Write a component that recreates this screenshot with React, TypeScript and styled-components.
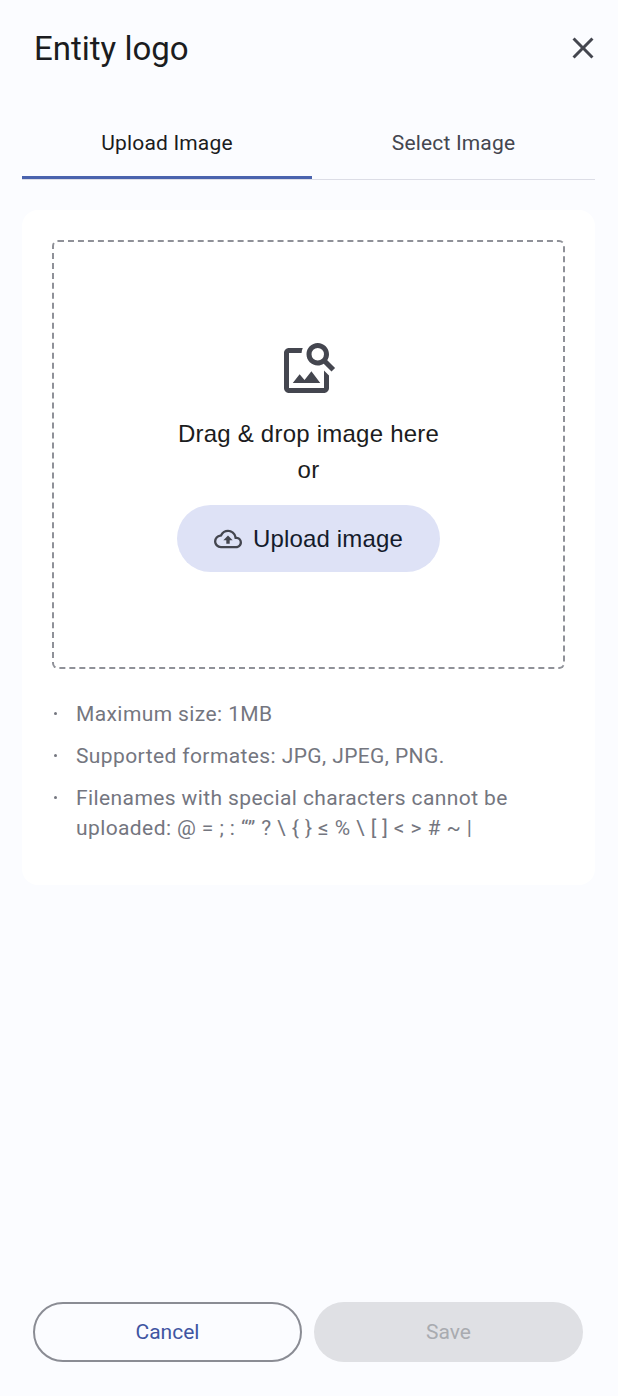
import React from 'react';
import styled, { createGlobalStyle } from 'styled-components';
import { MdClose, MdOutlineCloudUpload, MdOutlineImageSearch } from 'react-icons/md';

const GlobalStyle = createGlobalStyle`
  html, body {
    margin: 0;
    padding: 0;
    background: #fbfcff;
  }
  * {
    box-sizing: border-box;
  }
`;

const App = () => {
  return (
    <>
      <GlobalStyle />
      <Layout>
        <Header>
          <Title>Entity logo</Title>
          <CloseBtn aria-label="Close">
            <MdClose />
          </CloseBtn>
        </Header>
        <Tabs>
          <Tab $active>Upload Image</Tab>
          <Tab>Select Image</Tab>
        </Tabs>
        <Card>
          <DropZone>
            <DropIcon>
              <MdOutlineImageSearch />
            </DropIcon>
            <DropText>Drag &amp; drop image here</DropText>
            <DropText>or</DropText>
            <UploadBtn>
              <MdOutlineCloudUpload />
              Upload image
            </UploadBtn>
          </DropZone>
          <Rules>
            <Rule>Maximum size: 1MB</Rule>
            <Rule>Supported formates: JPG, JPEG, PNG.</Rule>
            <Rule>
              <span>
                Filenames with special characters cannot be uploaded: @ = ; : “” ? \ {'{'} {'}'} ≤ % \ [ ] &lt; &gt; # ~ |
              </span>
            </Rule>
          </Rules>
        </Card>
        <Footer>
          <CancelBtn>Cancel</CancelBtn>
          <SaveBtn disabled>Save</SaveBtn>
        </Footer>
      </Layout>
    </>
  );
};

export default App;

const Layout = styled.div`
  display: flex;
  flex-direction: column;
  height: 1396px;
  padding: 0 23px 0 22px;
  background: #fbfcff;
  font-family: Roboto, sans-serif;
`;

const Header = styled.div`
  display: flex;
  justify-content: space-between;
  align-items: center;
  height: 96px;
  padding-left: 12px;
`;

const Title = styled.h1`
  margin: 0;
  color: #1b1c20;
  font-size: 33px;
  font-weight: 400;
`;

const CloseBtn = styled.button`
  display: flex;
  margin-right: -6px;
  padding: 0;
  border: none;
  background: none;
  color: #44464f;
  font-size: 36px;
`;

const Tabs = styled.div`
  display: flex;
  height: 84px;
  border-bottom: 1px solid #dcdde6;
`;

const Tab = styled.div<{ $active?: boolean }>`
  display: flex;
  flex: ${(props) => (props.$active ? '0 0 290px' : '1')};
  align-items: center;
  justify-content: center;
  height: 83px;
  padding-top: 14px;
  border-bottom: 3px solid ${(props) => (props.$active ? '#4a63ae' : 'transparent')};
  color: ${(props) => (props.$active ? '#1b1c20' : '#44464f')};
  font-size: 21px;
  letter-spacing: 0.17px;
`;

const Card = styled.div`
  display: flex;
  flex-direction: column;
  height: 675px;
  margin-top: 30px;
  padding: 30px;
  border-radius: 16px;
  background: #fff;
`;

const DropZone = styled.div`
  display: flex;
  flex-direction: column;
  align-items: center;
  height: 429px;
  padding-top: 96px;
  border: 2px dashed #8f9198;
  border-radius: 6px;
`;

const DropIcon = styled.div`
  display: flex;
  margin-bottom: 18px;
  color: #44464f;
  font-size: 60px;
`;

const DropText = styled.div`
  color: #1b1c20;
  font-family: 'Liberation Sans', Arial, sans-serif;
  font-size: 24px;
  letter-spacing: 0.23px;
  line-height: 36px;
`;

const UploadBtn = styled.button`
  display: flex;
  align-items: center;
  justify-content: center;
  gap: 11px;
  width: 263px;
  height: 67px;
  margin-top: 17px;
  border: none;
  border-radius: 34px;
  background: #dee2f6;
  color: #141b2c;
  font-family: 'Liberation Sans', Arial, sans-serif;
  font-size: 24px;
  letter-spacing: 0.17px;

  svg {
    color: #44464f;
    font-size: 28px;
  }
`;

const Rules = styled.ul`
  display: flex;
  flex-direction: column;
  gap: 12px;
  margin: 30px 0 0;
  padding: 0 0 0 2px;
  list-style: none;
  color: #74767f;
  font-size: 21px;
  letter-spacing: 0.4px;
  line-height: 30px;
`;

const Rule = styled.li`
  display: flex;

  &::before {
    content: '';
    flex: 0 0 3px;
    height: 3px;
    margin: 13px 19px 0 0;
    border-radius: 50%;
    background: #74767f;
  }
`;

const Footer = styled.div`
  display: flex;
  gap: 12px;
  margin-top: auto;
  margin-bottom: 34px;
  padding-left: 11px;
`;

const CancelBtn = styled.button`
  flex: 0 0 269px;
  height: 60px;
  border: 2px solid #8a8c94;
  border-radius: 30px;
  background: transparent;
  color: #3f55a2;
  font-family: Roboto, sans-serif;
  font-size: 21px;
`;

const SaveBtn = styled.button`
  flex: 0 0 269px;
  height: 60px;
  border: none;
  border-radius: 30px;
  background: #dfe0e4;
  color: #a9abb0;
  font-family: Roboto, sans-serif;
  font-size: 21px;
`;
